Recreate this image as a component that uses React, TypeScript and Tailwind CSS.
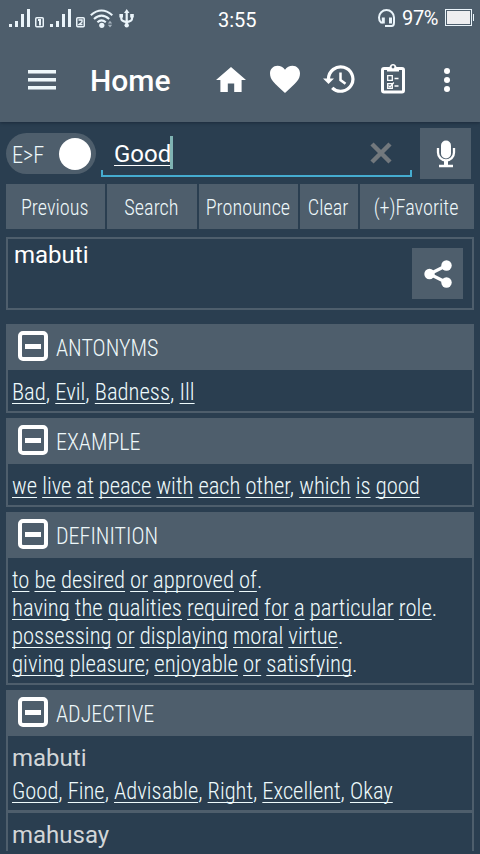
import React from "react";

const condensed = "font-['Roboto_Condensed',Roboto,sans-serif] font-light [font-stretch:75%]";

function Words({ text, className = "", scale = "scale-x-[0.942]" }: { text: string; className?: string; scale?: string }) {
  const parts = text.split(/([A-Za-z]+)/);
  return (
    <div className={`h-7 w-max origin-left whitespace-pre text-[24px] leading-7 text-[#eefafc] ${scale} ${condensed} ${className}`}>
      {parts.map((part, i) =>
        /[A-Za-z]/.test(part) ? (
          <span key={i} className="underline decoration-[1px] underline-offset-[3px] [text-decoration-skip-ink:none]">
            {part}
          </span>
        ) : (
          <span key={i}>{part}</span>
        ),
      )}
    </div>
  );
}

function Section({ title, children, open = false }: { title: string; children: React.ReactNode; open?: boolean }) {
  return (
    <section className={`shrink-0 border-x-2 border-[#4e5e6c] ${open ? "" : "border-b-2"}`}>
      <header className="flex h-[46px] items-start bg-[#4e5e6c] pl-[10px]">
        <span className="mt-[7px] flex size-[30px] items-center justify-center rounded-[5px] border-4 border-white">
          <span className="h-[5px] w-4 bg-white" />
        </span>
        <h2 className={`ml-2 mt-[10px] origin-left scale-x-[0.92] text-[24px] leading-7 text-[#eef8fa] ${condensed}`}>{title}</h2>
      </header>
      {children}
    </section>
  );
}

function Signal({ n }: { n: string }) {
  return (
    <svg width="36" height="20" viewBox="0 0 36 20" fill="#eaf4fa">
      <path d="M0 15h3v3H0zM6 12h3v6H6zM12 5h3v13h-3zM18 0h3v18h-3z" />
      <rect x="26.750" y="8.750" width="7.500" height="9" rx="1" fill="none" stroke="#eaf4fa" strokeWidth="1.500" />
      {n === "1" ? (
        <path d="M29 10h3v6.500h-2v-4.500H29z" />
      ) : (
        <path d="M28.500 11h3.500v2l-3 2.500h3.500" fill="none" stroke="#eaf4fa" strokeWidth="1.400" />
      )}
    </svg>
  );
}

function StatusBar() {
  return (
    <div className="flex h-9 items-start pl-[9px] text-white">
      <div className="mt-[9px] flex gap-[5px]">
        <Signal n="1" />
        <Signal n="2" />
      </div>
      <svg className="ml-[4px] mt-[9px]" width="24" height="20" viewBox="0 0 24 20" fill="none" stroke="#eaf4fa" strokeWidth="2.100">
        <path d="M.8 6.200Q11.500-3.200 22.300 6.200M4 10Q11.500 3.200 19.200 10M7.400 13.200Q11.500 9.600 15.800 13.200" />
        <circle cx="11.800" cy="16.300" r="2.600" fill="#eaf4fa" stroke="none" />
        <path d="M17.800 14.500 20 11.800l2.200 2.700zM17.800 15.800 20 18.500l2.200-2.700z" fill="#a5b2bd" stroke="none" />
      </svg>
      <svg className="ml-[5px] mt-[9px]" width="16" height="20" viewBox="0 0 16 20" fill="none" stroke="#eaf4fa" strokeWidth="2.200">
        <path d="M7.700 3v13M2.300 7v2.800q0 2.400 5.400 3.400M13 7v2.800q0 2.400-5.300 3.400" />
        <path d="M7.700 0 10.500 4H5zM.4 5H4v3.600H.4zM11.200 5h3.600v3.600h-3.600z" fill="#eaf4fa" stroke="none" />
        <circle cx="7.700" cy="16.300" r="2.200" fill="#eaf4fa" stroke="none" />
      </svg>
      <span className="ml-[83px] mt-[8px] text-[20px] leading-6">3:55</span>
      <svg className="ml-auto mt-[9px]" width="18" height="19" viewBox="0 0 18 19" fill="none" stroke="#eaf4fa" strokeWidth="2">
        <path d="M4.500 13.500H3Q1 12 1 8.500a7.500 7.500 0 0 1 15 0v5q0 3.500-2.500 3.500H7" />
        <path d="M3.800 8.500h3v6h-3zM11 8.500h3v6h-3z" fill="#eaf4fa" stroke="none" />
      </svg>
      <span className="ml-[6px] mt-[6px] text-[20px] leading-6 tracking-[-0.4px]">97%</span>
      <span className="ml-[7px] mt-[9px] h-[17px] w-[27px] border border-[#eaf4fa] p-px">
        <span className="block h-full w-full bg-[#eeeef0]" />
      </span>
      <span className="ml-px mr-[6px] mt-[14px] h-[7px] w-px bg-[#eaf4fa]" />
    </div>
  );
}

function AppBar() {
  return (
    <div className="flex h-[86px] items-center text-white">
      <div className="ml-[28px] mt-[1px] flex flex-col gap-[4px]">
        <span className="h-[4px] w-7 border-b border-[#a3afb8] bg-[#eef8fb]" />
        <span className="h-[4px] w-7 border-b border-[#a3afb8] bg-[#eef8fb]" />
        <span className="h-[4px] w-7 border-b border-[#a3afb8] bg-[#eef8fb]" />
      </div>
      <h1 className="ml-[34px] mt-[3px] w-[126px] text-[30px] font-medium leading-9">Home</h1>
      <svg className="-mt-[1px]" width="30" height="28" viewBox="0 0 30 28" fill="white">
        <path d="M15 2 0 15h4.400v12h7.400v-8.500h6.400V27h7.400V15H30z" />
      </svg>
      <svg className="ml-[23px]" width="32" height="30" viewBox="0 0 32 30" fill="white">
        <path d="M16 29C5 19 1 16 1 9.300 1 5 4.300 1.700 8.500 1.700c3 0 5.800 1.500 7.500 4 1.700-2.500 4.500-4 7.500-4C27.700 1.700 31 5 31 9.300 31 16 27 19 16 29z" />
      </svg>
      <svg className="ml-[21px]" width="34" height="30" viewBox="0 0 34 30" fill="none" stroke="white">
        <path d="M6.500 15A12.200 12.200 0 1 1 10.200 23.800" strokeWidth="3.200" />
        <path d="M1 14.500h11L6.500 20z" fill="white" stroke="none" />
        <path d="M18.500 8.500v7.500l5 3.700" strokeWidth="2.500" />
      </svg>
      <svg className="ml-[24px]" width="26" height="32" viewBox="0 0 26 32" fill="none" stroke="white">
        <rect x="2.500" y="5.500" width="21" height="23.500" rx="1.500" strokeWidth="3" />
        <path d="M7 4h2.500q1-3 3.500-3t3.500 3H19v4.500H7z" fill="white" stroke="none" />
        <circle cx="13" cy="4" r="1.400" fill="#4e5e6c" stroke="none" />
        <path d="M7.700 12.700h4.600v4.600H7.700zM7.700 20.700h4.600v4.600H7.700zM14.500 15.500h4M14.500 23h4" strokeWidth="1.300" />
        <path d="M8.500 22.500 10 24l3.800-4.500" strokeWidth="1.200" />
      </svg>
      <div className="ml-[38px] mt-[2px] flex flex-col gap-[3px]">
        <span className="size-[6px] rounded-full bg-white" />
        <span className="size-[6px] rounded-full bg-white" />
        <span className="size-[6px] rounded-full bg-white" />
      </div>
    </div>
  );
}

function ActionButton({ label, className }: { label: string; className: string }) {
  return (
    <button className={`flex items-center justify-center whitespace-nowrap bg-[#4e5e6c] pr-px pt-[3px] text-[22px] leading-6 text-[#eef8fa] ${condensed} ${className}`}>
      <span className="scale-x-[0.92]">{label}</span>
    </button>
  );
}

export default function App() {
  return (
    <div className="flex h-[854px] w-[480px] flex-col overflow-hidden bg-[#2a3e50] font-[Roboto,sans-serif]">
      <header className="h-[122px] shrink-0 bg-[#4e5e6c] shadow-[0_1px_3px_#1c2b3c]">
        <StatusBar />
        <AppBar />
      </header>

      <div className="flex h-[62px] shrink-0 pl-[6px] pt-[6px]">
        <div className="mt-[5px] flex h-[41px] w-[90px] items-center justify-between rounded-full bg-[#4e5e6c] pl-[6px] pr-[5px]">
          <span className={`mt-[3px] origin-left scale-x-[0.93] text-[24px] leading-7 text-[#eef8fa] ${condensed}`}>E&gt;F</span>
          <span className="size-[32px] rounded-full bg-white" />
        </div>
        <div className="ml-[5px] flex h-[49px] w-[311px] flex-col">
          <div className="flex h-[42px] items-start pl-[13px] pr-[20px]">
            <span className="mt-[12px] text-[24px] leading-7 text-white underline decoration-[1px] underline-offset-[3px]">Good</span>
            <span className="-ml-px mt-[8px] h-[33px] w-[3px] bg-[#7fb3b3]" />
            <svg className="ml-auto mt-[14px]" width="22" height="22" viewBox="0 0 22 22" stroke="#72787d" strokeWidth="4.500">
              <path d="M2 2l18 18M20 2 2 20" />
            </svg>
          </div>
          <div className="h-[7px] border-x-2 border-b-2 border-[#45acd0]" />
        </div>
        <div className="ml-[8px] flex h-[51px] w-[51px] items-center justify-center bg-[#4e5e6c]">
          <svg width="20" height="28" viewBox="0 0 20 28" fill="none" stroke="white" strokeWidth="2.300">
            <rect x="5" y="0.500" width="10" height="18" rx="5" fill="white" stroke="none" />
            <path d="M2 8v4.500a8 8 0 0 0 16 0V8M3 26h14" />
            <path d="M10 20v6" strokeWidth="4" />
          </svg>
        </div>
      </div>

      <div className="flex h-[45px] shrink-0 gap-[2px] pl-[6px]">
        <ActionButton label="Previous" className="w-[99px]" />
        <ActionButton label="Search" className="w-[90px]" />
        <ActionButton label="Pronounce" className="w-[99px]" />
        <ActionButton label="Clear" className="w-[58px]" />
        <ActionButton label="(+)Favorite" className="w-[114px]" />
      </div>

      <div className="mx-[6px] mt-[8px] flex h-[73px] shrink-0 justify-between border-2 border-[#4e5e6c] pl-[6px] pr-[9px]">
        <span className="mt-[2px] text-[24px] leading-7 text-white">mabuti</span>
        <button className="mt-[9px] flex size-[51px] items-center justify-center bg-[#4e5e6c]">
          <svg width="28" height="28" viewBox="0 0 28 28" fill="white" stroke="white">
            <path d="M22.500 5.500 5.500 14l17 8.500" fill="none" strokeWidth="3.200" />
            <circle cx="22.500" cy="5.500" r="5.200" stroke="none" />
            <circle cx="5.500" cy="14" r="5.200" stroke="none" />
            <circle cx="22.500" cy="22.500" r="5.200" stroke="none" />
          </svg>
        </button>
      </div>

      <main className="mx-[6px] mt-[14px] flex h-[527px] shrink-0 flex-col gap-[5px] overflow-hidden">
        <Section title="ANTONYMS">
          <Words text="Bad, Evil, Badness, Ill" className="mb-[5px] ml-1 mt-2" />
        </Section>
        <Section title="EXAMPLE">
          <Words text="we live at peace with each other, which is good" className="mb-[5px] ml-1 mt-2" scale="scale-x-[0.94]" />
        </Section>
        <Section title="DEFINITION">
          <div className="mb-[5px] ml-1 mt-2">
            <Words text="to be desired or approved of." scale="scale-x-[0.94]" />
            <Words text="having the qualities required for a particular role." scale="scale-x-[0.944]" />
            <Words text="possessing or displaying moral virtue." />
            <Words text="giving pleasure; enjoyable or satisfying." scale="scale-x-[0.949]" />
          </div>
        </Section>
        <Section title="ADJECTIVE" open>
          <div className="h-[77px] border-b-[3px] border-[#4e5e6c] pl-1 pt-2">
            <div className="h-[33px] text-[24px] leading-7 text-[#d2d6d8]">mabuti</div>
            <Words text="Good, Fine, Advisable, Right, Excellent, Okay" scale="scale-x-[0.936]" />
          </div>
          <div className="h-[60px] pl-1 pt-2 text-[24px] leading-7 text-[#d2d6d8]">mahusay</div>
        </Section>
      </main>
    </div>
  );
}
